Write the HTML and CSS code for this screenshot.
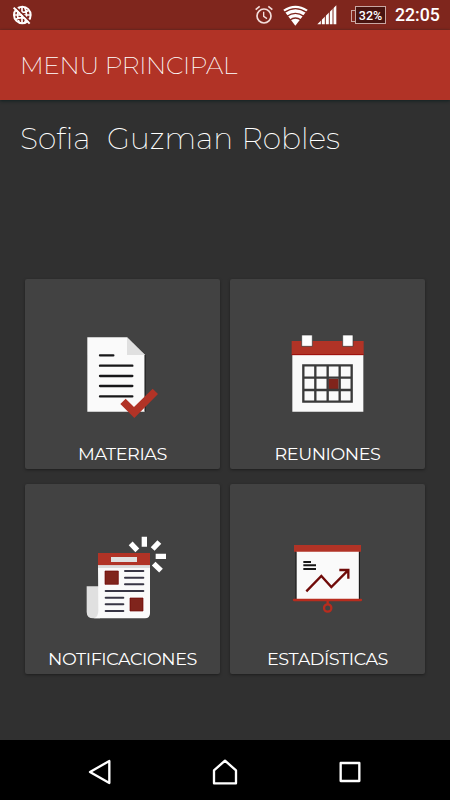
FILE: index.html
```html
<!DOCTYPE html>
<html lang="es">
<head>
  <meta charset="UTF-8">
  <meta name="viewport" content="width=device-width, initial-scale=1.0">
  <title>Menu principal</title>
  <link rel="stylesheet" href="styles.css">
</head>
<body>
  <div class="status-bar">
    <svg class="network-icon" width="20" height="20" viewBox="0 0 60 60">
      <circle cx="31" cy="30" r="25" fill="none" stroke="#fff" stroke-width="6"/>
      <path d="M30 5v50M5 30h50M11 17q19 10 38 0M11 43q19-10 38 0M22 7q-11 23 0 46M38 7q11 23 0 46" fill="none" stroke="#fff" stroke-width="5"/>
      <path d="M9 4l48 48" stroke="#7f261d" stroke-width="5"/>
      <path d="M5 8l48 48" stroke="#fff" stroke-width="6"/>
    </svg>
    <svg class="alarm-icon" width="18" height="20" viewBox="0 0 54 60">
      <circle cx="27" cy="33" r="21" fill="none" stroke="#f3dedc" stroke-width="5"/>
      <path d="M2 14L14 4M40 4l12 10" stroke="#f3dedc" stroke-width="5"/>
      <path d="M26 20v14l10 7" fill="none" stroke="#f3dedc" stroke-width="4"/>
    </svg>
    <svg class="wifi-icon" width="25" height="21" viewBox="0 0 75 63">
      <path d="M1 14Q37-10 74 14L37 62z" fill="#fff"/>
      <path d="M4 22Q37 0 71 22M12 34Q37 16 63 34M21 45Q37 33 54 45" fill="none" stroke="#7f261d" stroke-width="4"/>
    </svg>
    <svg class="signal-icon" width="20" height="20" viewBox="0 0 60 60">
      <path d="M1 58L58 1v57z" fill="#fff"/>
      <path d="M13 40v20M25 30v30M37 18v42M48 7v53" stroke="#7f261d" stroke-width="3"/>
    </svg>
    <div class="battery">32%</div>
    <span class="clock">22:05</span>
  </div>

  <header class="toolbar">
    <h1>MENU PRINCIPAL</h1>
  </header>

  <main class="content">
    <h2 class="student-name">Sofia&nbsp; Guzman Robles</h2>

    <div class="menu-grid">
      <a class="menu-card">
        <svg class="card-icon" viewBox="0 0 330 330">
          <path d="M52 52h119l54 53v170H52z" fill="#fafafa"/>
          <path d="M225 105v170" stroke="#111" stroke-width="3"/>
          <path d="M171 52l54 53h-54z" fill="#e0e0e0"/>
          <path d="M90 106h40M90 137h97M90 168h97M90 198h97M90 229h97" stroke="#171719" stroke-width="7" stroke-linecap="round"/>
          <path d="M151 252l16-16 25 25 56-55 16 16-71 72z" fill="#b13326"/>
        </svg>
        <span>MATERIAS</span>
      </a>

      <a class="menu-card">
        <svg class="card-icon" viewBox="0 0 330 330">
          <path d="M52 105h213v170H52z" fill="#fafafa"/>
          <path d="M50 63h216v42H50z" fill="#b13326"/>
          <path d="M50 104h216" stroke="#9c0d0a" stroke-width="3"/>
          <path d="M80 45h32v34H80zM203 45h31v34h-31z" fill="#fff" stroke="#333" stroke-width="2"/>
          <path d="M160 176h31v31h-31z" fill="#80241c"/>
          <path d="M85 136h145v109H85zM85 173h145M85 210h145M121 136v109M158 136v109M194 136v109" fill="none" stroke="#3a3a3a" stroke-width="7"/>
        </svg>
        <span>REUNIONES</span>
      </a>

      <a class="menu-card">
        <svg class="card-icon" viewBox="0 0 330 330">
          <path d="M50 184h40v96H70q-20 0-20-20z" fill="#e0e0e0"/>
          <path d="M84 121h156v144q0 15-15 15H72q13-5 13-23z" fill="#fafafa"/>
          <path d="M84 84h156v37H84z" fill="#b13326"/>
          <path d="M84 121h156v8H84z" fill="#dcdcdc"/>
          <path d="M123 96h78v15h-78z" fill="#e0e0e0"/>
          <path d="M105 138h40v40h-40zM180 219h39v39h-39z" fill="#80241c" stroke="#6d0000" stroke-width="2"/>
          <path d="M165 138h55M165 158h55M165 178h55M107 198h113M107 218h53M107 238h53M107 258h53" stroke="#383645" stroke-width="6" stroke-linecap="round"/>
          <path d="M223 35v30M182 55l20 21M268 51l-20 21M257 94h31M251 116l22 21" stroke="#fff" stroke-width="16"/>
        </svg>
        <span>NOTIFICACIONES</span>
      </a>

      <a class="menu-card">
        <svg class="card-icon" viewBox="0 0 330 330">
          <path d="M64 78h188v146H64z" fill="#fafafa"/>
          <path d="M63 80v143M253 80v143" stroke="#151515" stroke-width="3"/>
          <path d="M57 60h201v20H57z" fill="#b13326"/>
          <path d="M57 225h201" stroke="#b82c1e" stroke-width="7" stroke-linecap="round"/>
          <path d="M158 226v12" stroke="#b82c1e" stroke-width="7"/>
          <circle cx="158" cy="249" r="11" fill="none" stroke="#b82c1e" stroke-width="7"/>
          <path d="M85 111h23M85 121h38M85 132h38" stroke="#171717" stroke-width="6"/>
          <path d="M94 199l45-46 30 33 50-50M193 135h27v26" fill="none" stroke="#700b09" stroke-width="7"/>
        </svg>
        <span>ESTADÍSTICAS</span>
      </a>
    </div>
  </main>

  <nav class="nav-bar">
    <svg width="24" height="26" viewBox="0 0 72 78"><path d="M6 39l58-33v66z"/></svg>
    <svg width="26" height="26" viewBox="0 0 78 78"><path d="M6 73V34L39 5l33 29v39z"/></svg>
    <svg width="24" height="26" viewBox="0 0 72 78"><path d="M8 12h56v54H8z"/></svg>
  </nav>
</body>
</html>
```
FILE: styles.css
```css
* {
  box-sizing: border-box;
}

body {
  margin: 0;
  height: 800px;
  display: flex;
  flex-direction: column;
  overflow: hidden;
  background-color: #303030;
  color: #fff;
  font-family: "Montserrat", "Inter", sans-serif;
}

/* Status bar */
.status-bar {
  display: flex;
  align-items: center;
  height: 30px;
  padding: 0 10px 0 12px;
  background-color: #7f261d;
  font-family: "Roboto", sans-serif;
}

.alarm-icon {
  margin-left: auto;
}

.wifi-icon {
  margin-left: 10px;
}

.signal-icon {
  margin-left: 9px;
}

.battery {
  position: relative;
  width: 31px;
  height: 18px;
  margin-left: 18px;
  border: 1px solid #c9a7a3;
  background-color: #491410;
  font-size: 12.5px;
  font-weight: 500;
  line-height: 17px;
  text-align: center;
}

/* Battery terminal */
.battery::before {
  content: '';
  position: absolute;
  left: -5px;
  top: 3px;
  width: 4px;
  height: 10px;
  border: 1px solid #c9a7a3;
  border-right: none;
}

.clock {
  width: 45px;
  margin-left: 9px;
  font-size: 17.7px;
  font-weight: 500;
  white-space: nowrap;
}

/* Toolbar */
.toolbar {
  display: flex;
  align-items: center;
  height: 70px;
  padding-left: 20px;
  background-color: #b13326;
  box-shadow: 0 1px 3px #102020;
}

.toolbar h1 {
  margin: 0;
  font-size: 24.8px;
  font-weight: 200;
  letter-spacing: -0.35px;
}

.content {
  flex: 1;
  padding: 19px 25px 0;
}

.student-name {
  height: 40px;
  margin: 0 0 120px -5px;
  font-size: 29.7px;
  font-weight: 200;
  line-height: 39px;
  word-spacing: 0.8px;
  white-space: nowrap;
}

/* Menu */
.menu-grid {
  display: grid;
  grid-template-columns: 195px 195px;
  grid-auto-rows: 190px;
  gap: 15px 10px;
}

.menu-card {
  display: flex;
  flex-direction: column;
  align-items: center;
  padding-top: 41px;
  border-radius: 2px;
  background-color: #424242;
  box-shadow: 0 1px 3px rgba(0, 0, 0, 0.4);
  font-size: 17.6px;
  line-height: 22px;
}

.menu-card span {
  margin-top: 13px;
  font-weight: 400;
  letter-spacing: -0.42px;
}

.card-icon {
  width: 110px;
  height: 110px;
  margin-left: 5px;
}

/* Navigation bar */
.nav-bar {
  display: flex;
  align-items: center;
  justify-content: space-between;
  height: 60px;
  padding: 4px 88px 0;
  background-color: #000;
}

.nav-bar svg {
  fill: none;
  stroke: #fff;
  stroke-width: 7;
  stroke-linejoin: round;
}
```
